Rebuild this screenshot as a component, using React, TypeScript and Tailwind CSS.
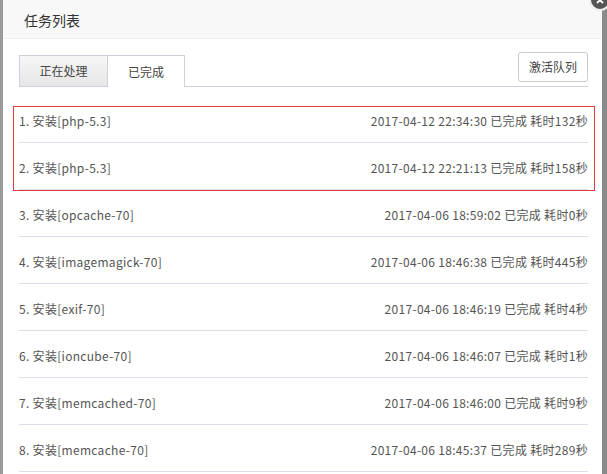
const tasks = [
  { name: "安装[php-5.3]", time: "2017-04-12 22:34:30", cost: "132" },
  { name: "安装[php-5.3]", time: "2017-04-12 22:21:13", cost: "158" },
  { name: "安装[opcache-70]", time: "2017-04-06 18:59:02", cost: "0" },
  { name: "安装[imagemagick-70]", time: "2017-04-06 18:46:38", cost: "445" },
  { name: "安装[exif-70]", time: "2017-04-06 18:46:19", cost: "4" },
  { name: "安装[ioncube-70]", time: "2017-04-06 18:46:07", cost: "1" },
  { name: "安装[memcached-70]", time: "2017-04-06 18:46:00", cost: "9" },
  { name: "安装[memcache-70]", time: "2017-04-06 18:45:37", cost: "289" },
];

export default function App() {
  return (
    <div
      className="flex h-[474px] w-[607px] overflow-hidden bg-[#8a8a8a] text-[12px] text-[#555]"
      style={{ fontFamily: '"Noto Sans CJK SC", "Noto Sans", sans-serif' }}
    >
      <div className="w-[3px] bg-[#9a9a9a]" />
      <div className="relative flex w-[599px] flex-col bg-white">
        <div className="flex h-[39px] items-center border-b border-[#eee] bg-[#f8f8f8] pl-[21px] pt-[3px] text-[14px] text-[#333]">
          任务列表
        </div>

        <div className="flex items-end pl-4 pr-[14px] pt-[16px]">
          <div className="flex h-[32px] w-[89px] items-center justify-center border border-[#d0d0dc] bg-gradient-to-b from-[#f6f6f6] to-[#e6e6e6] text-[#444]">
            正在处理
          </div>
          <div className="flex h-[32px] w-[77px] items-center justify-center border border-b-0 border-l-0 border-[#d0d0dc] bg-white text-[#444]">
            已完成
          </div>
          <div className="relative flex-1 self-stretch border-b border-[#d0d0dc]">
            <button className="absolute right-0 top-[-3px] h-[30px] w-[70px] rounded-[3px] border border-[#ccc] bg-white text-[12px] text-[#444]">
              激活队列
            </button>
          </div>
        </div>

        <div className="relative flex flex-col pl-4 pr-[14px] pt-[9px] tracking-[0.3px]">
          {tasks.map((t, i) => (
            <div
              key={i}
              className="flex h-[47px] items-start justify-between border-b border-[#dedde9] pt-[15px] leading-[20px]"
            >
              <span>
                {i + 1}. {t.name}
              </span>
              <span>
                {t.time} 已完成 耗时{t.cost}秒
              </span>
            </div>
          ))}
          <div className="absolute left-[10px] top-[19px] h-[85px] w-[582px] border border-[#e8383d]" />
        </div>

        <div className="absolute right-[-9px] top-[-11px] flex h-[22px] w-[22px] items-center justify-center rounded-full border-2 border-[#eee] bg-[#555]">
          <svg width="10" height="10" viewBox="0 0 10 10">
            <path d="M2 2L8 8M8 2L2 8" stroke="white" strokeWidth="1.8" />
          </svg>
        </div>
      </div>
      <div className="w-[5px] bg-[#8a8a8a]" />
    </div>
  );
}
